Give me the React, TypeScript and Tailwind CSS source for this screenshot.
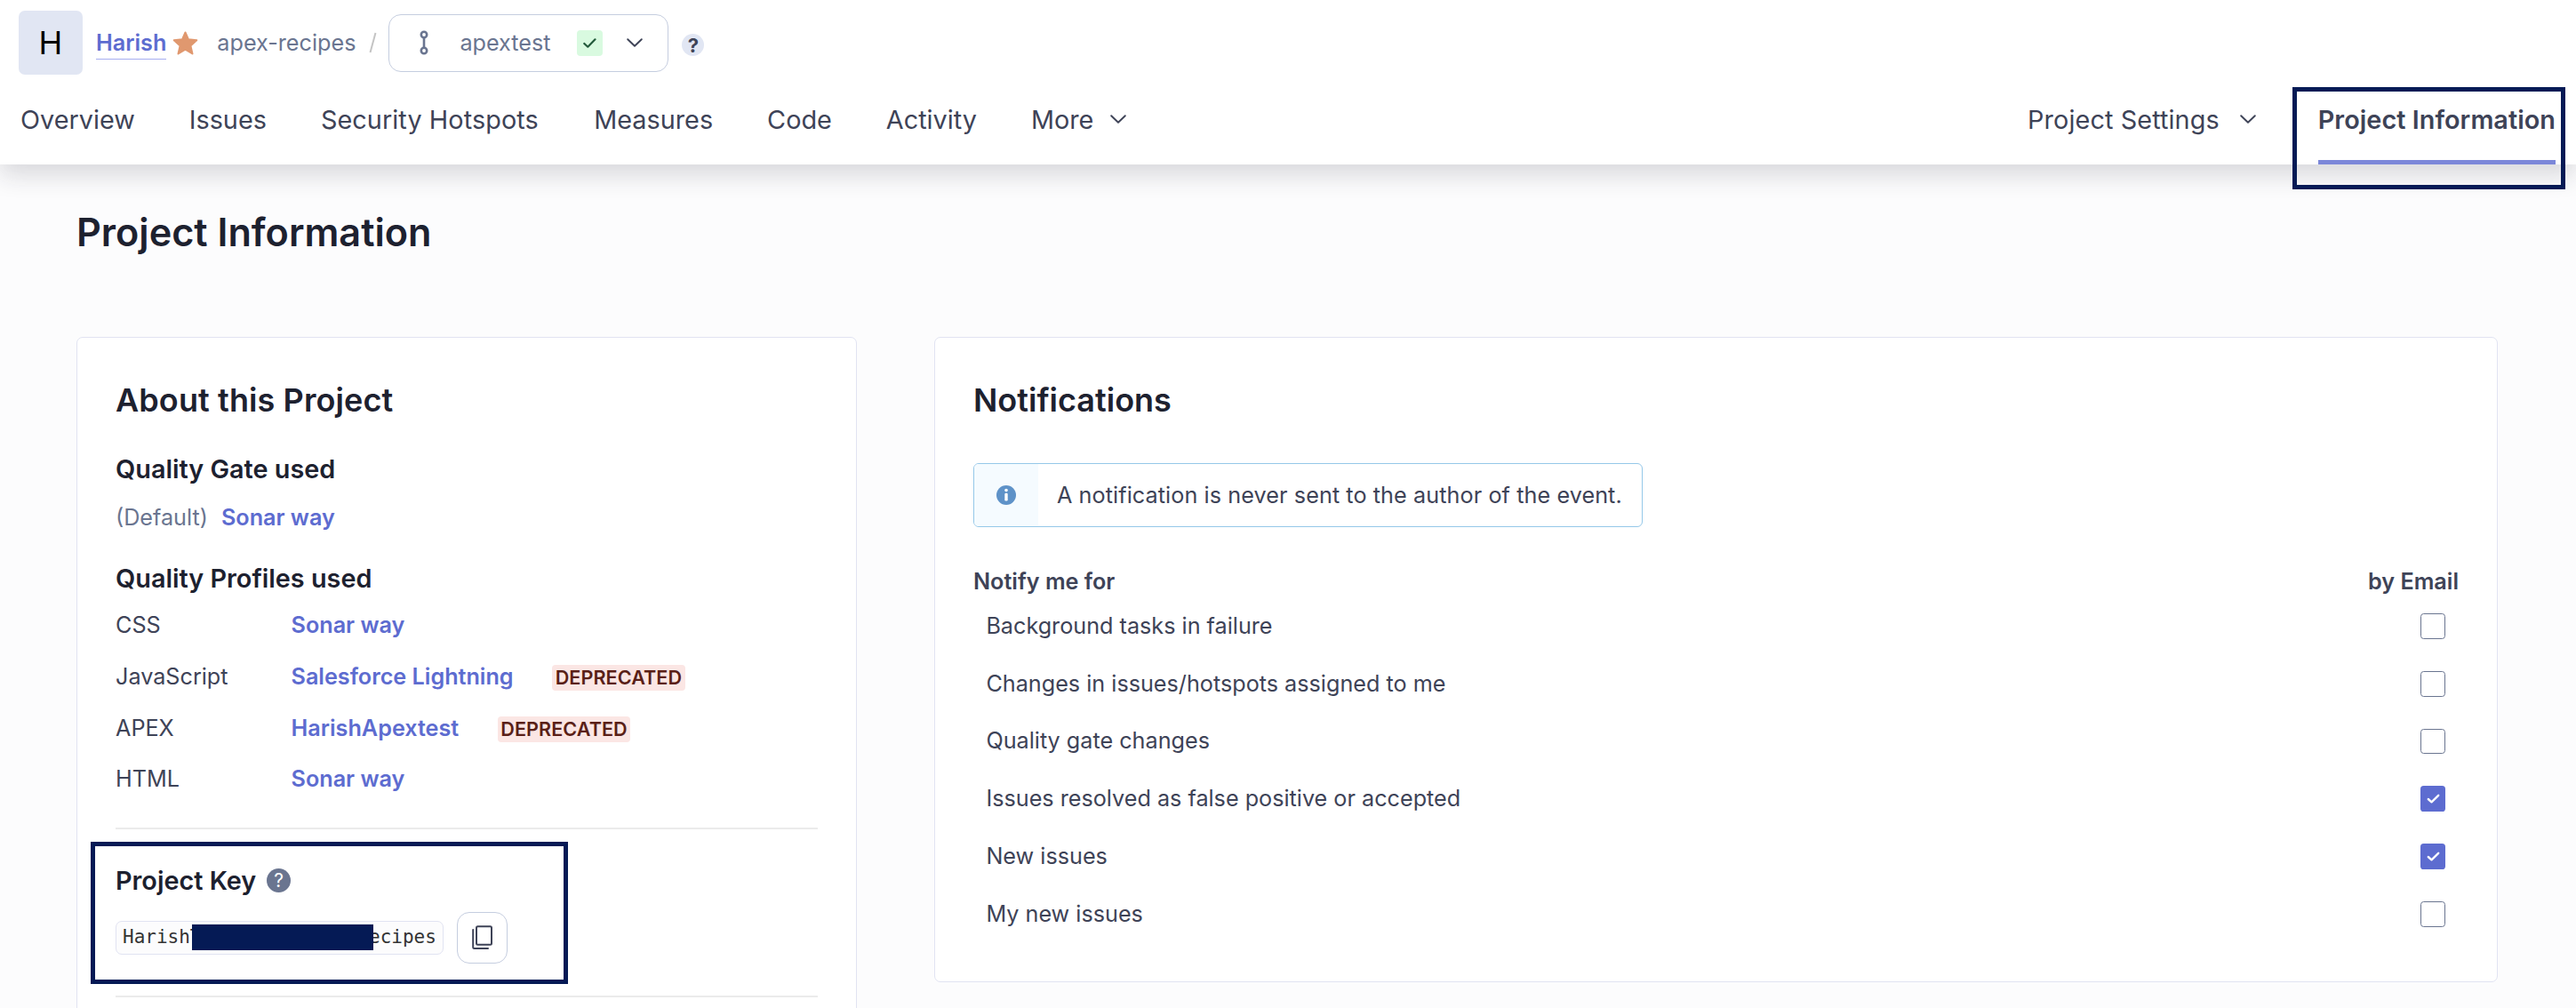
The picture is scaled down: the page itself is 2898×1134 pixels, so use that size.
import { ReactNode } from "react";

const FONT = "font-['Inter',sans-serif]";

function Chevron() {
  return (
    <svg className="block h-[10px] w-[18px]" viewBox="0 0 18 10" fill="none" stroke="currentColor" strokeWidth="1.9" strokeLinecap="round" strokeLinejoin="round">
      <path d="M1.2 1.2 9 8.8l7.8-7.6" />
    </svg>
  );
}

function Link({ children }: { children: ReactNode }) {
  return <a className="font-semibold text-[#5d6cd0]">{children}</a>;
}

function TopBar() {
  return (
    <div className="flex h-[96px] items-center pl-[21px] text-[25.2px] text-[#6a7590]">
      <div className="flex size-[72px] items-center justify-center rounded-[7px] bg-[#e1e6f3] text-[36px] text-black">H</div>
      <a className="ml-[15px] mt-[2px] h-[36px] border-b border-[#a6adf0] font-semibold leading-[34px] text-[#5d6cd0]">Harish</a>
      <svg className="ml-[7px] block h-[27px] w-[29px]" viewBox="0 0 29 27" fill="#e0986f" stroke="#e0986f" strokeWidth="2" strokeLinejoin="round">
        <path d="M14.5 1.5 18 9.3l9.3.9-6.9 6.2 2.1 9.1-8-4.8-8 4.8 2.1-9.1L1.7 10.2l9.3-.9z" />
      </svg>
      <span className="ml-[21px] mt-[1px]">apex-recipes</span>
      <svg className="ml-[15px] block h-[24px] w-[9px]" viewBox="0 0 9 24" fill="none" stroke="#c4c4c4" strokeWidth="2">
        <path d="M7.5 1 1.5 23" />
      </svg>
      <div className="ml-[13px] flex h-[65px] w-[315px] items-center rounded-[14px] border border-[#c5cddf]">
        <svg className="ml-[33px] block h-[28px] w-[12px]" viewBox="0 0 12 28" fill="none" stroke="#6a7590" strokeWidth="2.6">
          <circle cx="6" cy="5" r="3.2" />
          <circle cx="6" cy="23" r="3.2" />
          <path d="M6 8v12" />
        </svg>
        <span className="ml-[34px] mt-[1px]">apextest</span>
        <span className="ml-[29px] flex size-[29px] items-center justify-center rounded-[4px] bg-[#d9fae0]">
          <svg className="block h-[11px] w-[15px]" viewBox="0 0 15 11" fill="none" stroke="#235a3b" strokeWidth="2.2" strokeLinecap="round" strokeLinejoin="round">
            <path d="M1.3 6 5.3 9.7 13.5 1.3" />
          </svg>
        </span>
        <span className="ml-[27px] text-[#3e4357]"><Chevron /></span>
      </div>
      <span className="ml-[15px] mt-[5px] flex size-[25px] items-center justify-center rounded-full bg-[#e1e6f3] text-[22px] font-bold leading-none text-[#3e4357]">?</span>
    </div>
  );
}

function Nav() {
  return (
    <nav className="flex h-[89px] pl-[23px] pr-[23px] text-[28.8px] leading-[77px] text-[#3e4357]">
      <div className="flex gap-[61px]">
        <a>Overview</a>
        <a>Issues</a>
        <a className="tracking-[0.08px]">Security Hotspots</a>
        <a className="ml-[1.5px]">Measures</a>
        <a>Code</a>
        <a>Activity</a>
        <a className="flex"><span>More</span><span className="ml-[19px] mt-[33px]"><Chevron /></span></a>
      </div>
      <div className="ml-auto flex">
        <a className="flex tracking-[0.1px]"><span>Project Settings</span><span className="ml-[23px] mt-[33px]"><Chevron /></span></a>
        <a className="relative ml-[70px] border-b-[5px] border-[#7b87d9] font-semibold tracking-[0.05px]">
          Project Information
          <span className="absolute -left-[29px] top-[2px] h-[115px] w-[307px] border-[5px] border-[#051a55]" />
        </a>
      </div>
    </nav>
  );
}

const profiles = [
  { lang: "CSS", name: "Sonar way", deprecated: false },
  { lang: "JavaScript", name: "Salesforce Lightning", deprecated: true },
  { lang: "APEX", name: "HarishApextest", deprecated: true },
  { lang: "HTML", name: "Sonar way", deprecated: false },
];

function About() {
  return (
    <section className="h-[800px] w-[878px] rounded-[7px] border border-[#e1e3f2] bg-white px-[43px]">
      <h2 className="mt-[45px] text-[36px] font-semibold leading-[50px] tracking-[0.1px] text-[#1d212f]">About this Project</h2>
      <h3 className="mt-[35px] text-[28.8px] font-semibold leading-[36px] text-[#1d212f]">Quality Gate used</h3>
      <div className="mt-[18px] flex gap-[15px] leading-[36px]">
        <span className="text-[#6a7590]">(Default)</span>
        <Link>Sonar way</Link>
      </div>
      <h3 className="mt-[33px] text-[28.8px] font-semibold leading-[36px] text-[#1d212f]">Quality Profiles used</h3>
      <div className="mt-[6.5px]">
        {profiles.map((p) => (
          <div key={p.lang} className="flex h-[57.6px] items-center">
            <span className="w-[197.5px]">{p.lang}</span>
            <Link>{p.name}</Link>
            {p.deprecated && (
              <span className="ml-[43.5px] mt-[2px] h-[29px] rounded-[4px] bg-[#fbe6e4] px-[3.6px] text-[21.6px] font-semibold leading-[29px] tracking-[0.05px] text-[#5a1f17]">DEPRECATED</span>
            )}
          </div>
        ))}
      </div>
      <hr className="mt-[25.1px] border-t-2 border-[#ebebeb]" />
      <ProjectKey />
      <hr className="mt-[13px] border-t-2 border-[#ebebeb]" />
    </section>
  );
}

function ProjectKey() {
  return (
    <div className="-ml-[28px] mt-[14px] h-[160px] w-[537px] border-[5px] border-[#051a55] pl-[23px]">
      <h3 className="mt-[21px] flex items-center text-[28.8px] font-semibold leading-[36px] text-[#1d212f]">
        Project Key
        <span className="ml-[12px] flex size-[27px] items-center justify-center rounded-full bg-[#6a7590] text-[21px] font-normal leading-none text-white">?</span>
      </h3>
      <div className="mt-[17px] flex items-center">
        <code className="flex h-[38px] w-[369px] items-center rounded-[7px] border border-[#e1e3f2] bg-[#fcfcfd] pl-[7px] font-['DejaVu_Sans_Mono',monospace] text-[21px] text-[#333]">
          <span>HarishT</span>
          <span className="z-10 -ml-[10.5px] h-[29px] w-[204px] bg-[#051a55]" />
          <span className="-ml-[5px]">ecipes</span>
        </code>
        <button className="ml-[15px] flex h-[58px] w-[57px] items-center justify-center rounded-[14px] border border-[#c5cddf]">
          <svg className="block h-[27px] w-[23px]" viewBox="0 0 23 27" fill="none" stroke="#3e4357" strokeWidth="2" strokeLinecap="round" strokeLinejoin="round">
            <rect x="5" y="1.2" width="17" height="20.5" rx="1.5" />
            <path d="M1.2 5v19.5q0 1.5 1.5 1.5H18" />
          </svg>
        </button>
      </div>
    </div>
  );
}

const events = [
  { label: "Background tasks in failure", on: false },
  { label: "Changes in issues/hotspots assigned to me", on: false },
  { label: "Quality gate changes", on: false },
  { label: "Issues resolved as false positive or accepted", on: true },
  { label: "New issues", on: true },
  { label: "My new issues", on: false },
];

function Checkbox({ on }: { on: boolean }) {
  return on ? (
    <span className="flex h-[28.8px] w-[28px] items-center justify-center rounded-[3.6px] bg-[#5d6cd0]">
      <svg className="block h-[11px] w-[15px]" viewBox="0 0 15 11" fill="none" stroke="white" strokeWidth="2.4" strokeLinecap="round" strokeLinejoin="round">
        <path d="M1.8 6 5.5 9.3 13.2 1.8" />
      </svg>
    </span>
  ) : (
    <span className="h-[28.8px] w-[28px] rounded-[3.6px] border border-[#6a7590]" />
  );
}

function Notifications() {
  return (
    <section className="h-[726px] w-[1759px] rounded-[7px] border border-[#e1e3f2] bg-white px-[43px]">
      <h2 className="mt-[45px] text-[36px] font-semibold leading-[50px] text-[#1d212f]">Notifications</h2>
      <div className="mt-[46px] flex h-[72px] w-[753px] items-center overflow-hidden rounded-[6px] border border-[#95c8e9]">
        <div className="flex h-full w-[72px] items-center justify-center bg-[#f5fbff]">
          <svg className="block size-[22px]" viewBox="0 0 22 22">
            <circle cx="11" cy="11" r="11" fill="#5e92c8" />
            <circle cx="11" cy="5.5" r="1.8" fill="white" />
            <rect x="9.3" y="8.8" width="3.4" height="8.6" rx="1.2" fill="white" />
          </svg>
        </div>
        <span className="ml-[21px] mt-[1px] whitespace-nowrap tracking-[0.08px]">A notification is never sent to the author of the event.</span>
      </div>
      <div className="mt-[43px] flex justify-between font-semibold leading-[36px]">
        <span>Notify me for</span>
        <span>by Email</span>
      </div>
      <div className="mt-[3.6px] pl-[14.4px] pr-[15px]">
        {events.map((e) => (
          <div key={e.label} className="flex h-[64.8px] justify-between pt-[14.4px] leading-[36px]">
            <span className="-mt-[4.2px]">{e.label}</span>
            <Checkbox on={e.on} />
          </div>
        ))}
      </div>
    </section>
  );
}

export default function App() {
  return (
    <div className={`${FONT} h-[1134px] w-[2898px] overflow-hidden bg-[#fcfcfd] text-[25.2px] text-[#3e4357]`}>
      <header className="relative h-[185px] bg-white shadow-[0_12px_26px_0px_rgba(29,33,47,0.16)]">
        <TopBar />
        <Nav />
      </header>
      <main className="px-[86px] pt-[46px]">
        <h1 className="text-[43.2px] font-semibold leading-[60px] text-[#1d212f]">Project Information</h1>
        <div className="mt-[88px] flex gap-[87px]">
          <About />
          <Notifications />
        </div>
      </main>
    </div>
  );
}
